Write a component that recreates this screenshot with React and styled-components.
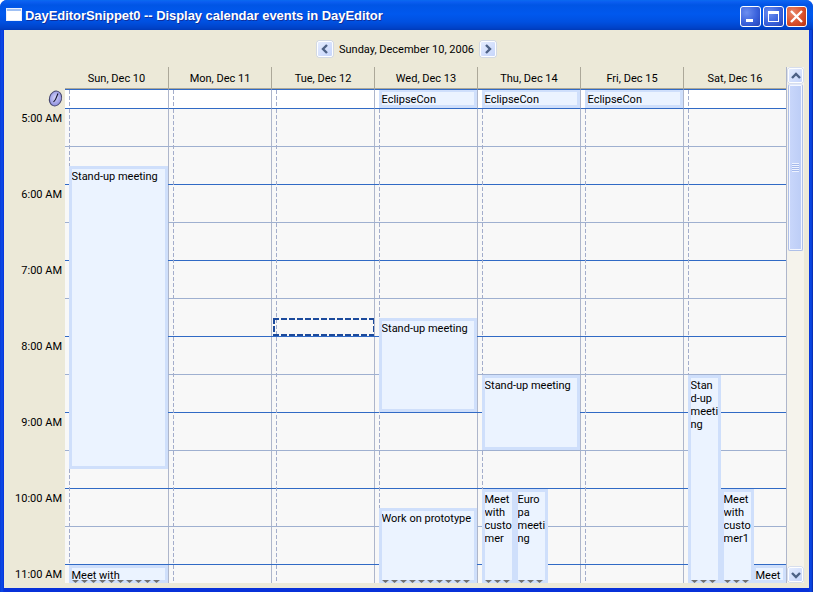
import React from 'react';
import styled, { createGlobalStyle } from 'styled-components';

const GlobalStyle = createGlobalStyle`
  html, body {
    margin: 0;
    padding: 0;
    background: #fff;
  }
  * {
    box-sizing: border-box;
  }
`;

const Window = styled.div`
  width: 813px;
  height: 592px;
  display: flex;
  flex-direction: column;
  overflow: hidden;
  border-radius: 7px 7px 0 0;
  background: linear-gradient(90deg, #0a3bd6 0, #0a4be8 2px, #0831d9 4px, #0831d9 calc(100% - 4px), #0a4be8 calc(100% - 2px), #0626a8 100%);
  font-family: Roboto, "DejaVu Sans", sans-serif;
  font-size: 11px;
  color: #000;
`;

const TitleBar = styled.div`
  height: 30px;
  flex: none;
  display: flex;
  align-items: center;
  padding: 0 6px 0 6px;
  background: linear-gradient(180deg, #0a6af0 0, #0a5df0 2px, #0055e5 5px, #0058ee 14px, #0050e0 22px, #0042c8 28px, #003ab8 30px);
`;

const TitleIcon = styled.svg`
  width: 16px;
  height: 14px;
  flex: none;
`;

const TitleText = styled.div`
  margin-left: 3px;
  flex: 1;
  font-family: "Liberation Sans", Arial, sans-serif;
  font-size: 13px;
  font-weight: bold;
  letter-spacing: -0.05px;
  color: #fff;
  white-space: nowrap;
  text-shadow: 1px 1px 0 #0f2f9c;
`;

const WindowButtons = styled.div`
  display: flex;
  gap: 2px;
  padding-top: 2px;
`;

const WindowButton = styled.div`
  width: 21px;
  height: 21px;
  border: 1px solid #fff;
  border-radius: 3px;
  display: flex;
  align-items: center;
  justify-content: center;
  background: ${(p) => (p.$close
    ? 'radial-gradient(circle at 30% 30%, #e8896c 0, #d9502c 55%, #b83210 100%)'
    : 'radial-gradient(circle at 30% 30%, #6d8ff0 0, #3a62dc 55%, #2443b8 100%)')};
`;

const Client = styled.div`
  flex: 1;
  min-height: 0;
  margin: 0 4px 4px;
  background: #ece9d8;
  display: flex;
  flex-direction: column;
  padding-bottom: 5px;
`;

const NavBar = styled.div`
  height: 37px;
  flex: none;
  display: flex;
  align-items: center;
  justify-content: center;
  gap: 5px;
  padding-top: 1px;
`;

const NavLabel = styled.span`
  margin: 0 1px;
  white-space: nowrap;
`;

const ArrowButton = styled.div`
  width: 16px;
  height: 16px;
  flex: none;
  display: flex;
  align-items: center;
  justify-content: center;
  border: 1px solid #fdfeff;
  border-radius: 2px;
  background: linear-gradient(135deg, #e4ecfe 0, #c6d5fb 100%);
  box-shadow: 0 0 0 0.5px #b9c9ee;
`;

const Main = styled.div`
  flex: 1;
  min-height: 0;
  display: flex;
  padding-right: 5px;
`;

const Calendar = styled.div`
  width: 783px;
  display: flex;
  flex-direction: column;
  border-right: 1px solid #aeb6cb;
`;

const Row = styled.div`
  display: flex;
  flex: none;
`;

const Gutter = styled.div`
  width: 61px;
  flex: none;
`;

const ClockGutter = styled(Gutter)`
  display: flex;
  justify-content: flex-end;
  padding: 1px 2px 0 0;
`;

const HeaderCell = styled.div`
  width: 103px;
  height: 22px;
  display: flex;
  align-items: center;
  justify-content: center;
  padding-top: 1px;
  border-left: ${(p) => (p.$first ? 'none' : '1px solid #aca899')};
  border-bottom: 1px solid #aca899;
  white-space: nowrap;
`;

const AllDayCell = styled.div`
  position: relative;
  width: 103px;
  height: 20px;
  background: #fff;
  border-top: 1px solid #316ac5;
  border-bottom: 1px solid #316ac5;
  border-left: ${(p) => (p.$first ? 'none' : '1px solid #aeb6cb')};
`;

const DashLine = styled.div`
  position: absolute;
  top: 0;
  bottom: 0;
  left: 4px;
  width: 1px;
  background: repeating-linear-gradient(180deg, #a3adcb 0, #a3adcb 4px, transparent 4px, transparent 6px);
`;

const Body = styled.div`
  flex: 1;
  min-height: 0;
  display: flex;
  overflow: hidden;
`;

const TimeColumn = styled(Gutter)`
  display: flex;
  flex-direction: column;
`;

const HourLabel = styled.div`
  height: 76px;
  flex: none;
  padding: 3px 3px 0 0;
  line-height: 13px;
  text-align: right;
  white-space: nowrap;
`;

const DayColumn = styled.div`
  position: relative;
  width: 103px;
  flex: none;
  background: #f8f8f8;
  border-left: ${(p) => (p.$first ? 'none' : '1px solid #aeb6cb')};
`;

const Slot = styled.div`
  position: relative;
  height: 38px;
  margin-left: ${(p) => (p.$first ? 0 : -1)}px;
  border-bottom: 1px solid ${(p) => (p.$hour ? '#316ac5' : '#9fb0d0')};
`;

const Event = styled.div`
  position: absolute;
  left: ${(p) => p.$left}px;
  top: ${(p) => p.$top}px;
  width: ${(p) => p.$width}px;
  height: ${(p) => p.$height}px;
  background: #ebf3ff;
  border: 3px solid #cfdffb;
`;

const EventTitle = styled.div`
  height: ${(p) => (p.$compact ? 'auto' : '100%')};
  margin-left: -0.5px;
  padding-top: ${(p) => (p.$compact ? 0 : 1)}px;
  overflow: ${(p) => (p.$compact ? 'visible' : 'hidden')};
  line-height: ${(p) => (p.$compact ? 15 : 13)}px;
  white-space: pre;
`;

const AllDayEvent = styled(Event)`
  top: 0;
  height: 18px;
  border-top-width: 2px;
`;

const MoreMarks = styled.div`
  position: absolute;
  left: 0;
  right: 0;
  bottom: -3px;
  height: 3px;
  display: flex;
  gap: 2px;
`;

const MoreMark = styled.span`
  width: 7px;
  height: 3px;
  flex: none;
  background: #707070;
  clip-path: polygon(0 0, 100% 0, 50% 100%);
`;

const dash = '#1c4a9c 0, #1c4a9c 6px, transparent 6px, transparent 8px';

const FocusBox = styled.div`
  position: absolute;
  left: 1px;
  top: 209px;
  width: 102px;
  height: 18px;
  background:
    repeating-linear-gradient(90deg, ${dash}) top / 100% 2px no-repeat,
    repeating-linear-gradient(90deg, ${dash}) bottom / 100% 2px no-repeat,
    repeating-linear-gradient(180deg, ${dash}) left / 2px 100% no-repeat,
    repeating-linear-gradient(180deg, ${dash}) right / 2px 100% no-repeat;
`;

const ScrollBar = styled.div`
  width: 17px;
  flex: none;
  display: flex;
  flex-direction: column;
  padding: 1px;
  background: #f5f3ec;
`;

const ScrollButton = styled(ArrowButton)`
  width: 15px;
  height: 15px;
`;

const Thumb = styled.div`
  width: 15px;
  height: 167px;
  margin-top: 1px;
  flex: none;
  border: 1px solid #aebfe8;
  border-top-color: #dfe7fb;
  border-radius: 2px;
  box-shadow: inset 0 0 0 1px #f4f7ff;
  background: linear-gradient(90deg, #c9d7fb 0, #bccdf6 100%);
  display: flex;
  align-items: center;
  justify-content: center;
`;

const Grip = styled.div`
  width: 7px;
  height: 9px;
  background: repeating-linear-gradient(180deg, #eef3ff 0, #eef3ff 1px, #a4b9ec 1px, #a4b9ec 2px);
`;

const Spacer = styled.div`
  flex: 1;
`;

const Chevron = ({ dir }) => {
  const rotate = { left: 0, up: 90, right: 180, down: 270 }[dir];
  return (
    <svg width="10" height="10" viewBox="0 0 10 10" style={{ transform: `rotate(${rotate}deg)` }}>
      <polyline points="7,1 3,5 7,9" fill="none" stroke="#4d6185" strokeWidth="2.4" />
    </svg>
  );
};

const ClockIcon = () => (
  <svg width="15" height="17" viewBox="0 0 15 17">
    <defs>
      <radialGradient id="clockFace" cx="45%" cy="45%" r="60%">
        <stop offset="0" stopColor="#d4d4fa" />
        <stop offset="1" stopColor="#8a8bdc" />
      </radialGradient>
    </defs>
    <ellipse cx="7.5" cy="8.5" rx="6" ry="7.5" transform="rotate(18 7.5 8.5)" fill="url(#clockFace)" stroke="#45466e" strokeWidth="1" />
    <polyline points="10,3.5 7.5,9.5 5.5,12" fill="none" stroke="#14142a" strokeWidth="1.1" />
  </svg>
);

const days = ['Sun, Dec 10', 'Mon, Dec 11', 'Tue, Dec 12', 'Wed, Dec 13', 'Thu, Dec 14', 'Fri, Dec 15', 'Sat, Dec 16'];
const hours = ['5:00 AM', '6:00 AM', '7:00 AM', '8:00 AM', '9:00 AM', '10:00 AM', '11:00 AM'];
const slots = Array.from({ length: 13 }, (_, i) => i);

// offsets are relative to the day column, top 0 is the line under 5:00 AM
const events = {
  0: [
    { title: 'Stand-up meeting', left: 4, top: 57, width: 99, height: 303 },
    { title: 'Meet with', left: 4, top: 456, width: 99, height: 18, marks: 10 },
  ],
  3: [
    { title: 'Stand-up meeting', left: 4, top: 209, width: 98, height: 94 },
    { title: 'Work on prototype', left: 4, top: 399, width: 98, height: 75, marks: 10 },
  ],
  4: [
    { title: 'Stand-up meeting', left: 4, top: 266, width: 98, height: 75 },
    { title: 'Meet\nwith\ncusto\nmer', left: 4, top: 380, width: 33, height: 94, marks: 3 },
    { title: 'Euro\npa\nmeeti\nng', left: 37, top: 380, width: 33, height: 94, marks: 3 },
  ],
  6: [
    { title: 'Stan\nd-up\nmeeti\nng', left: 4, top: 266, width: 33, height: 208, marks: 3 },
    { title: 'Meet\nwith\ncusto\nmer1', left: 37, top: 380, width: 33, height: 94, marks: 3 },
    { title: 'Meet', left: 69, top: 456, width: 33, height: 18 },
  ],
};

const allDayEvents = [3, 4, 5];

export default function App() {
  return (
    <>
      <GlobalStyle />
      <Window>
        <TitleBar>
          <TitleIcon viewBox="0 0 16 14">
            <rect x="0.5" y="0.5" width="15" height="12" fill="#fff" stroke="#e8f0ff" />
            <rect x="1" y="1" width="14" height="2" fill="#9fc0f4" />
          </TitleIcon>
          <TitleText>DayEditorSnippet0 -- Display calendar events in DayEditor</TitleText>
          <WindowButtons>
            <WindowButton>
              <svg width="13" height="13" viewBox="0 0 13 13">
                <rect x="2" y="9" width="7" height="3" fill="#fff" />
              </svg>
            </WindowButton>
            <WindowButton>
              <svg width="13" height="13" viewBox="0 0 13 13">
                <rect x="1.5" y="2.5" width="10" height="9" fill="none" stroke="#fff" />
                <rect x="1" y="1" width="11" height="3" fill="#fff" />
              </svg>
            </WindowButton>
            <WindowButton $close>
              <svg width="13" height="13" viewBox="0 0 13 13">
                <path d="M1 1 L12 12 M12 1 L1 12" stroke="#fff" strokeWidth="2.4" />
              </svg>
            </WindowButton>
          </WindowButtons>
        </TitleBar>
        <Client>
          <NavBar>
            <ArrowButton><Chevron dir="left" /></ArrowButton>
            <NavLabel>Sunday, December 10, 2006</NavLabel>
            <ArrowButton><Chevron dir="right" /></ArrowButton>
          </NavBar>
          <Main>
            <Calendar>
              <Row>
                <Gutter />
                {days.map((day, i) => (
                  <HeaderCell key={day} $first={i === 0}>{day}</HeaderCell>
                ))}
              </Row>
              <Row>
                <ClockGutter><ClockIcon /></ClockGutter>
                {days.map((day, i) => (
                  <AllDayCell key={day} $first={i === 0}>
                    <DashLine />
                    {allDayEvents.includes(i) && (
                      <AllDayEvent $left={4} $width={98}>
                        <EventTitle $compact>EclipseCon</EventTitle>
                      </AllDayEvent>
                    )}
                  </AllDayCell>
                ))}
              </Row>
              <Body>
                <TimeColumn>
                  {hours.map((hour) => <HourLabel key={hour}>{hour}</HourLabel>)}
                </TimeColumn>
                {days.map((day, i) => (
                  <DayColumn key={day} $first={i === 0}>
                    {slots.map((slot) => (
                      <Slot key={slot} $first={i === 0} $hour={slot % 2 === 1} />
                    ))}
                    <DashLine />
                    {i === 2 && <FocusBox />}
                    {(events[i] || []).map((ev) => (
                      <Event key={ev.title} $left={ev.left} $top={ev.top} $width={ev.width} $height={ev.height}>
                        <EventTitle $compact={ev.height < 20}>{ev.title}</EventTitle>
                        {ev.marks && (
                          <MoreMarks>
                            {Array.from({ length: ev.marks }, (_, k) => <MoreMark key={k} />)}
                          </MoreMarks>
                        )}
                      </Event>
                    ))}
                  </DayColumn>
                ))}
              </Body>
            </Calendar>
            <ScrollBar>
              <ScrollButton><Chevron dir="up" /></ScrollButton>
              <Thumb><Grip /></Thumb>
              <Spacer />
              <ScrollButton><Chevron dir="down" /></ScrollButton>
            </ScrollBar>
          </Main>
        </Client>
      </Window>
    </>
  );
}
